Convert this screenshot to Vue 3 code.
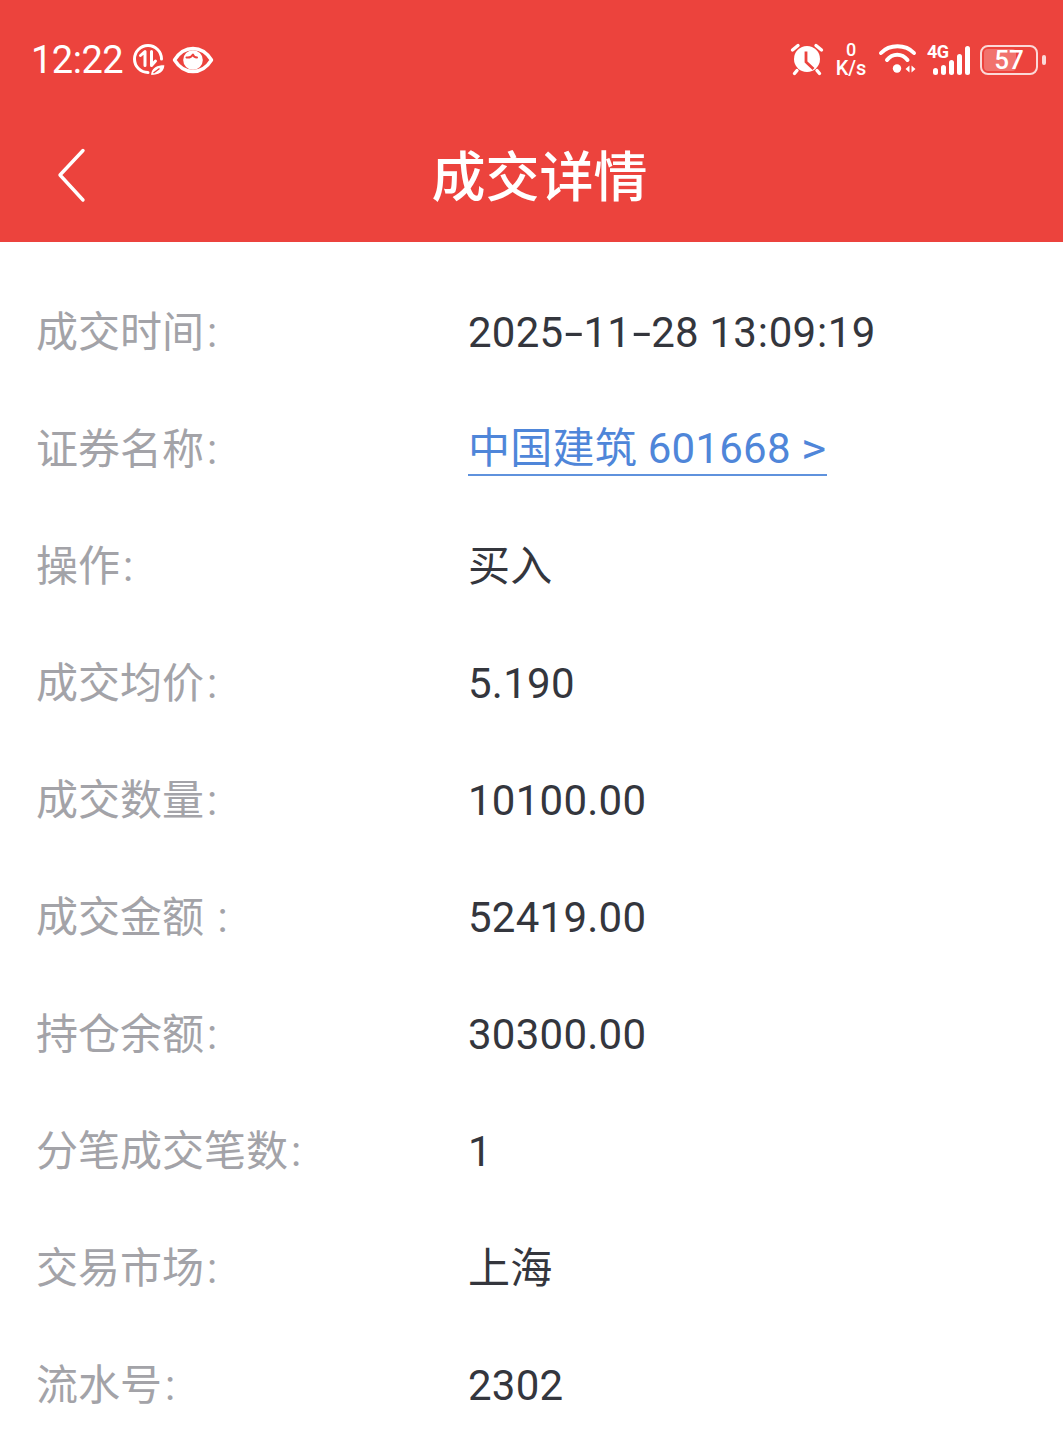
<script setup>
const rows = [
  { label: '成交时间', colon: ':', value: '2025-11-28 13:09:19' },
  { label: '证券名称', colon: ':', value: '中国建筑 601668 ', arrow: '>', link: true },
  { label: '操作', colon: ':', value: '买入' },
  { label: '成交均价', colon: ':', value: '5.190' },
  { label: '成交数量', colon: ':', value: '10100.00' },
  { label: '成交金额 ', colon: ':', value: '52419.00' },
  { label: '持仓余额', colon: ':', value: '30300.00' },
  { label: '分笔成交笔数', colon: ':', value: '1' },
  { label: '交易市场', colon: ':', value: '上海' },
  { label: '流水号', colon: ':', value: '2302' },
]

// The reference font draws hyphens and colons wider than Roboto, so they get their own spans.
const parts = (text) => text.split(/([-:])/).filter(Boolean)
</script>

<template>
  <div class="page">
    <header class="header">
      <div class="status">
        <div class="status-left">
          <span class="time">12:22</span>
          <svg class="ic-data" viewBox="0 0 34 34" width="34" height="34" fill="none" stroke="#fff">
            <path d="M16 29.500A13.500 13.500 0 1 1 29.500 16" stroke-width="3" stroke-linecap="round" />
            <path d="M8.500 12.500L13 8.500V22.500M19.500 8.500V22.500L23.500 18" stroke-width="3" stroke-linecap="round" stroke-linejoin="round" />
            <path d="M18.500 32.500c0-7 5-11 14.500-11 0 7-5 11-14.500 11z" fill="#fff" stroke="#ec433d" stroke-width="1.200" />
            <path d="M21.500 30l6-4.500" stroke="#ec433d" stroke-width="1.400" />
          </svg>
          <svg class="ic-eye" viewBox="0 0 42 28" width="42" height="28" fill="none">
            <path d="M2.500 14C7.500 6 13.500 2.500 21 2.500S34.500 6 39.500 14C34.500 22 28.500 25.500 21 25.500S7.500 22 2.500 14z" stroke="#fff" stroke-width="3.400" stroke-linejoin="round" />
            <circle cx="21" cy="14" r="9.800" fill="#fff" />
            <path d="M14.500 11.500c3 .5 5-.5 6.500-3 .5 2 2 3 4 3" stroke="#ec433d" stroke-width="2" stroke-linecap="round" stroke-linejoin="round" />
          </svg>
        </div>
        <div class="status-right">
          <svg class="ic-alarm" viewBox="0 0 34 34" width="34" height="34" fill="none">
            <circle cx="17" cy="17" r="13" fill="#fff" />
            <path d="M16 9.500V20L23.500 27" stroke="#ec433d" stroke-width="2.800" />
            <path d="M2.500 8L8 3.500M31.500 8L26 3.500M7 28.500L4.500 31.500M27 28.500L29.500 31.500" stroke="#fff" stroke-width="3.400" stroke-linecap="round" />
          </svg>
          <div class="speed"><span class="speed-num">0</span><span class="speed-unit">K/s</span></div>
          <svg class="ic-wifi" viewBox="0 0 40 32" width="40" height="32" fill="none" stroke="#fff" stroke-linecap="round">
            <path d="M3 10C11.500 1 27.500 1 36 10" stroke-width="4" />
            <path d="M9 17C14.500 10 24 10 29.500 17" stroke-width="4" />
            <circle cx="19" cy="25.500" r="4.200" fill="#fff" stroke="none" />
            <path d="M31.500 22.500v7l-4-3.500zM33.500 22.500v7l4-3.500z" fill="#fff" stroke="none" />
          </svg>
          <div class="signal">
            <span class="net">4G</span>
            <div class="bars">
              <i class="b1"></i><i class="b2"></i><i class="b3"></i><i class="b4"></i><i class="b5"></i>
            </div>
          </div>
          <div class="battery">
            <div class="battery-body">
              <div class="battery-fill"></div>
              <span class="battery-num">57</span>
            </div>
            <div class="battery-cap"></div>
          </div>
        </div>
      </div>
      <div class="nav">
        <svg class="back" viewBox="0 0 32 56" width="32" height="56" fill="none">
          <path d="M27 3.500L4 28l23 25" stroke="#fff" stroke-width="3.400" stroke-linecap="round" stroke-linejoin="round" />
        </svg>
        <h1 class="title">成交详情</h1>
      </div>
    </header>
    <main class="list">
      <div v-for="row in rows" :key="row.label" class="row">
        <span class="label">{{ row.label }}<span class="label-colon">{{ row.colon }}</span></span>
        <span class="value" :class="{ link: row.link }"><template v-for="(part, i) in parts(row.value)" :key="i"><span v-if="part === '-'" class="hyphen">{{ part }}</span><span v-else-if="part === ':'" class="colon">{{ part }}</span><template v-else>{{ part }}</template></template><span v-if="row.arrow" class="arrow">{{ row.arrow }}</span></span>
      </div>
    </main>
  </div>
</template>

<style>
html, body { background: #fff; }
</style>

<style scoped>
.page {
  width: 1063px;
  height: 1434px;
  overflow: hidden;
  background: #fff;
  font-family: Roboto, "Noto Sans CJK SC", sans-serif;
}
.header {
  height: 242px;
  background: #ec433d;
  color: #fff;
  display: flex;
  flex-direction: column;
}
.status {
  height: 120px;
  padding: 0 17px 0 31px;
  display: flex;
  align-items: center;
  justify-content: space-between;
}
.status-left { display: flex; align-items: center; }
.time { font-size: 38px; line-height: 44px; width: 101px; letter-spacing: -0.5px; }
.ic-data { margin-top: -1px; }
.ic-eye { margin-left: 6px; }
.status-right { display: flex; align-items: center; }
.ic-alarm { margin-right: 10px; margin-top: -2px; }
.speed {
  width: 34px;
  display: flex;
  flex-direction: column;
  align-items: center;
  font-weight: 500;
  margin-right: 10px;
}
.speed-num { font-size: 18px; line-height: 16px; }
.speed-unit { font-size: 20px; line-height: 20px; }
.ic-wifi { margin-right: 8px; margin-top: -2px; }
.signal { position: relative; width: 45px; height: 30px; margin-right: 9px; }
.net {
  position: absolute;
  left: 1px;
  top: -2px;
  font-size: 18px;
  line-height: 18px;
  font-weight: 700;
  letter-spacing: -0.5px;
}
.bars {
  position: absolute;
  right: 1px;
  bottom: 0;
  display: flex;
  align-items: flex-end;
  gap: 3px;
}
.bars i { display: block; width: 5px; background: #fff; border-radius: 2.500px; }
.b1 { height: 7px; }
.b2 { height: 10px; }
.b3 { height: 15px; }
.b4 { height: 21px; }
.b5 { height: 29px; }
.battery { display: flex; align-items: center; gap: 4px; }
.battery-body {
  position: relative;
  width: 58px;
  height: 30px;
  box-sizing: border-box;
  border: 2.500px solid rgba(255, 255, 255, 0.8);
  border-radius: 8px;
  display: flex;
  align-items: center;
  justify-content: center;
}
.battery-fill {
  position: absolute;
  left: 2px;
  top: 2px;
  bottom: 2px;
  width: 32px;
  background: rgba(255, 255, 255, 0.25);
  border-radius: 4px;
}
.battery-num { position: relative; font-size: 26px; line-height: 26px; font-weight: 500; }
.battery-cap { width: 4px; height: 10px; background: rgba(255, 255, 255, 0.8); border-radius: 2px; }
.nav {
  position: relative;
  height: 122px;
  display: flex;
  align-items: center;
  justify-content: center;
  padding-left: 16px;
}
.back { position: absolute; left: 56px; top: 27px; }
.title {
  margin: 0 0 4px;
  font-size: 54px;
  line-height: 70px;
  font-weight: 500;
}
.list { padding-top: 32px; }
.row {
  height: 117px;
  display: flex;
  align-items: center;
  padding-left: 36px;
  font-size: 42px;
}
.label { width: 432px; color: #a3a3a8; line-height: 56px; white-space: pre; }
.label-colon { padding-left: 3px; }
.value { color: #34363d; line-height: 56px; white-space: pre; letter-spacing: 0.25px; }
.hyphen {
  display: inline-block;
  width: 18px;
  margin-left: 2px;
  text-align: center;
  transform: scaleX(1.6);
}
.colon { padding: 0 0.500px; }
.link {
  color: #4f86d9;
  line-height: 50px;
  border-bottom: 2px solid #5f92dd;
}
.arrow {
  display: inline-block;
  width: 26px;
  transform: scaleX(1.15);
  transform-origin: left center;
}
</style>
